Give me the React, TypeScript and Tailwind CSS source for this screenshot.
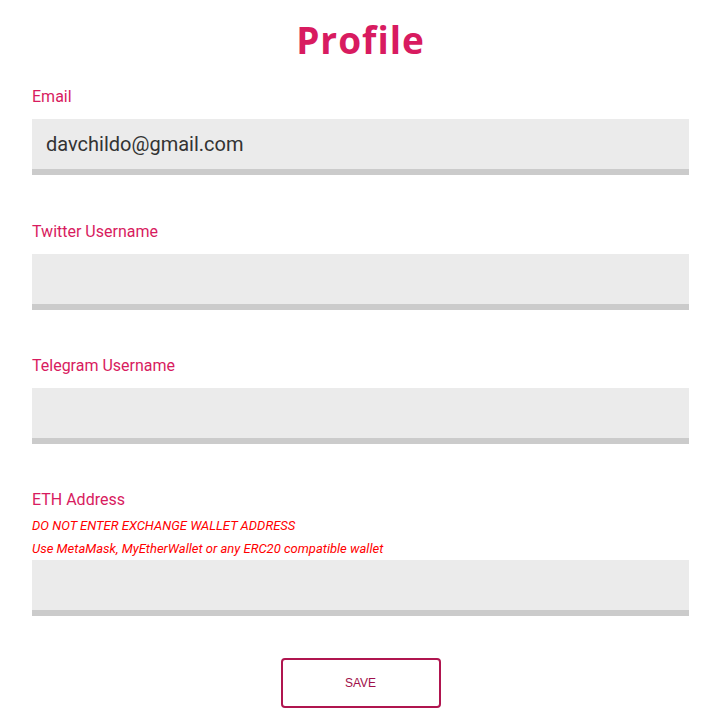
import { useState } from 'react';

const fields = [
    { key: 'email', label: 'Email' },
    { key: 'twitter', label: 'Twitter Username' },
    { key: 'telegram', label: 'Telegram Username' },
    { key: 'eth', label: 'ETH Address' },
];

export default function App() {
    const [values, setValues] = useState<Record<string, string>>({
        email: 'davchildo@gmail.com',
        twitter: '',
        telegram: '',
        eth: '',
    });

    return (
        <div className="w-full min-h-screen bg-white pl-8 pr-[34px] pt-[18px] font-['Roboto',sans-serif]">
            <h1 className="text-center text-[37px] leading-[44px] font-bold tracking-[1px] text-[#d81b60] font-['Open_Sans',sans-serif]">
                Profile
            </h1>

            <div className="mt-[25px] flex flex-col gap-[46px]">
                {fields.map((f) => (
                    <div key={f.key} className={`flex flex-col ${f.key === 'email' ? 'mb-px' : ''}`}>
                        <label className="text-[16px] leading-[20px] text-[#d81b60]">{f.label}</label>
                        {f.key === 'eth' && (
                            <div className="mt-[4px] text-[13px] leading-[23px] italic text-[#ff0000]">
                                <p>DO NOT ENTER EXCHANGE WALLET ADDRESS</p>
                                <p>Use MetaMask, MyEtherWallet or any ERC20 compatible wallet</p>
                            </div>
                        )}
                        <input
                            type="text"
                            value={values[f.key]}
                            onChange={(e) => setValues((prev) => ({ ...prev, [f.key]: e.target.value }))}
                            className={`${f.key === 'eth' ? 'mt-0' : 'mt-[12px]'} w-full h-[56px] bg-[#ebebeb] border-b-[6px] border-[#cbcbcb] px-[14px] text-[20px] text-[#333] outline-none font-['Roboto',sans-serif]`}
                        />
                    </div>
                ))}
            </div>

            <div className="mt-[42px] flex justify-center">
                <button className="w-[160px] h-[50px] rounded-[4px] border-2 border-[#b0154f] bg-white text-[12px] text-[#a0104a] font-['Liberation_Sans',sans-serif]">
                    SAVE
                </button>
            </div>
        </div>
    );
}
